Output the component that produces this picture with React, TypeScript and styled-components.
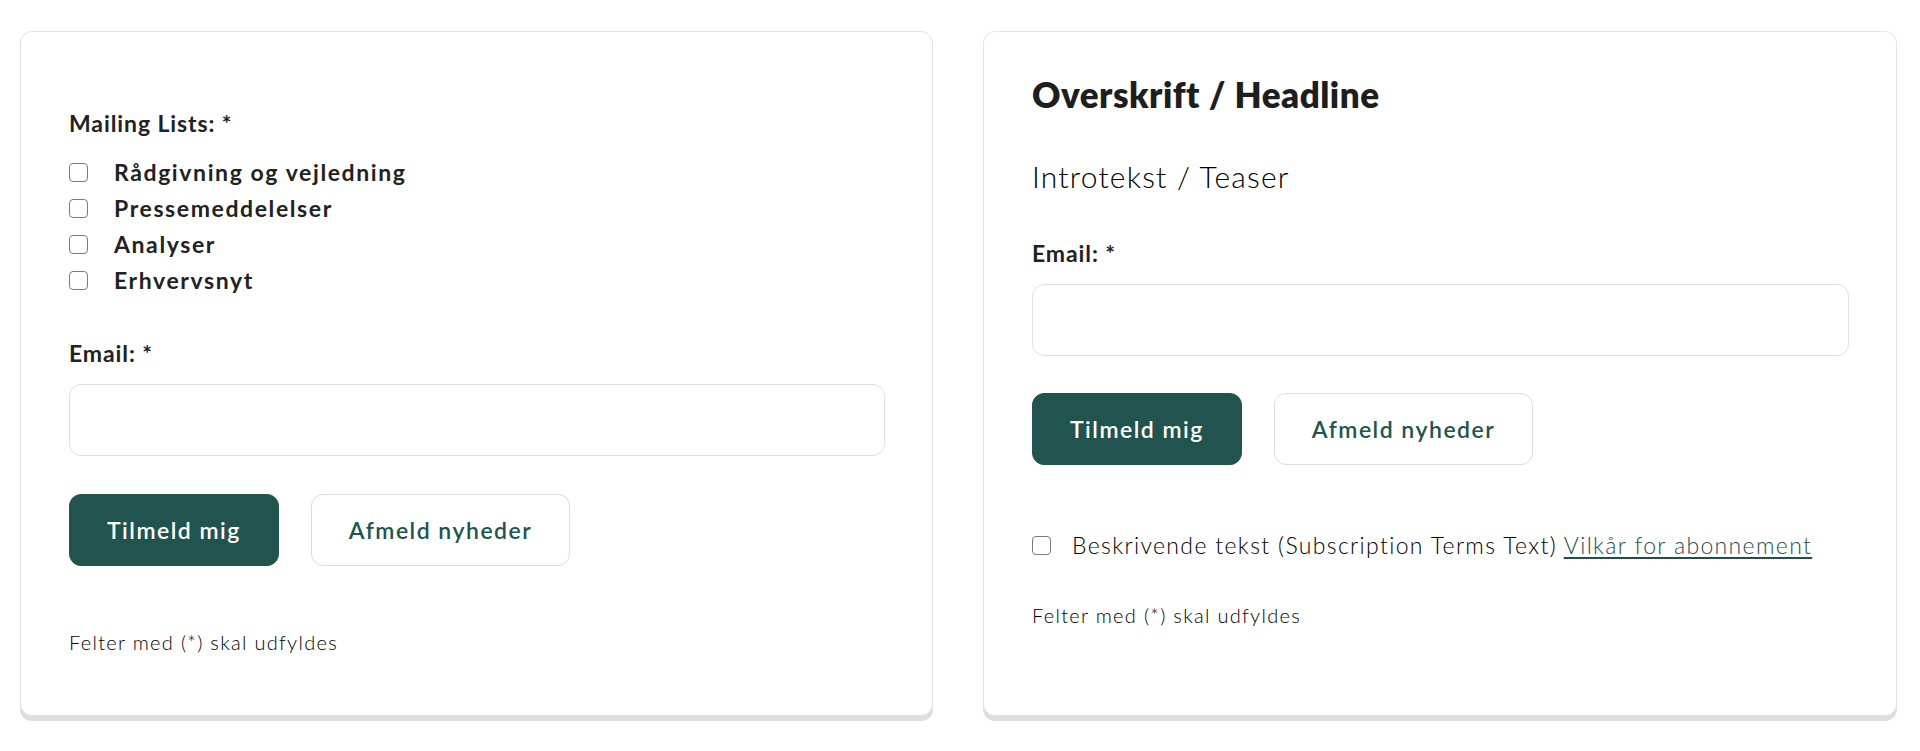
import React from "react";
import styled, { createGlobalStyle } from "styled-components";

const Global = createGlobalStyle`
  html, body { margin: 0; padding: 0; background: #ffffff; }
  body { font-family: "Lato", "Open Sans", sans-serif; color: #222222; }
  * { box-sizing: border-box; }
`;

const Page = styled.div`
  display: grid;
  grid-template-columns: 913px 914px;
  column-gap: 50px;
  padding: 31px 23px 30px 20px;
`;

const Card = styled.section<{ $padTop: number }>`
  background: #fff;
  border: 1px solid #e3e3e3;
  border-radius: 12px;
  box-shadow: 0 5px 0 0 #dedede;
  padding: ${(p) => p.$padTop}px 47px 0 48px;
  height: 685px;
  display: flex;
  flex-direction: column;
`;

const Title = styled.h2`
  margin: 0;
  font-family: "Lato", sans-serif;
  font-weight: 800;
  font-size: 35px;
  line-height: 41px;
  color: #1e1e1e;
  letter-spacing: 0.5px;
`;

const Intro = styled.p`
  margin: 41px 0 0;
  font-family: "Lato", sans-serif;
  font-weight: 300;
  font-size: 30px;
  line-height: 40px;
  letter-spacing: 1.2px;
  color: #000;
`;

const Label = styled.div<{ $mt: number }>`
  margin-top: ${(p) => p.$mt}px;
  font-weight: 700;
  font-size: 23px;
  line-height: 30px;
  letter-spacing: 0.9px;
  color: #222;
`;

const CheckList = styled.div`
  margin-top: 16px;
  display: flex;
  flex-direction: column;
`;

const CheckRow = styled.label`
  display: flex;
  align-items: center;
  gap: 26px;
  height: 36px;
  font-weight: 700;
  font-size: 23px;
  letter-spacing: 1.6px;
  color: #222;
`;

const Box = styled.input.attrs({ type: "checkbox" })`
  appearance: none;
  margin: 0;
  width: 19px;
  height: 19px;
  border: 1.5px solid #7a7a7a;
  border-radius: 4px;
  background: #fff;
  flex: none;
`;

const TextInput = styled.input`
  margin-top: 16px;
  width: 100%;
  height: 72px;
  border: 1.5px solid #e0e0e0;
  border-radius: 12px;
  background: #fff;
  font: inherit;
  padding: 0 20px;
  outline: none;
`;

const Buttons = styled.div<{ $mt: number }>`
  margin-top: ${(p) => p.$mt}px;
  display: flex;
  gap: 32px;
`;

const Button = styled.button<{ $primary?: boolean }>`
  height: 72px;
  padding: 0 37px;
  border-radius: 12px;
  font-family: "Lato", sans-serif;
  font-weight: 600;
  font-size: 23px;
  letter-spacing: 1.5px;
  cursor: pointer;
  background: ${(p) => (p.$primary ? "#22544f" : "#ffffff")};
  color: ${(p) => (p.$primary ? "#ffffff" : "#22544f")};
  border: ${(p) => (p.$primary ? "1.5px solid #22544f" : "1.5px solid #dcdcdc")};
`;

const Terms = styled.label`
  margin-top: 65px;
  display: flex;
  align-items: center;
  gap: 21px;
  font-weight: 300;
  font-size: 23px;
  line-height: 30px;
  letter-spacing: 1.35px;
  color: #000;
`;

const TermsLink = styled.a`
  color: #1f4f4a;
  text-decoration: underline;
  text-underline-offset: 3px;
`;

const Note = styled.p<{ $mt: number }>`
  margin: ${(p) => p.$mt}px 0 0;
  font-weight: 300;
  font-size: 20px;
  line-height: 28px;
  letter-spacing: 1.3px;
  color: #000;
`;

const lists = ["Rådgivning og vejledning", "Pressemeddelelser", "Analyser", "Erhvervsnyt"];

export default function App() {
  return (
    <>
      <Global />
      <Page>
        <Card $padTop={76}>
          <Label $mt={0}>Mailing Lists: *</Label>
          <CheckList>
            {lists.map((l) => (
              <CheckRow key={l}>
                <Box />
                {l}
              </CheckRow>
            ))}
          </CheckList>
          <Label $mt={40}>Email: *</Label>
          <TextInput type="email" />
          <Buttons $mt={38}>
            <Button $primary>Tilmeld mig</Button>
            <Button>Afmeld nyheder</Button>
          </Buttons>
          <Note $mt={62}>Felter med (*) skal udfyldes</Note>
        </Card>
        <Card $padTop={42}>
          <Title>Overskrift / Headline</Title>
          <Intro>Introtekst / Teaser</Intro>
          <Label $mt={42}>Email: *</Label>
          <TextInput type="email" />
          <Buttons $mt={37}>
            <Button $primary>Tilmeld mig</Button>
            <Button>Afmeld nyheder</Button>
          </Buttons>
          <Terms>
            <Box />
            <span>
              Beskrivende tekst (Subscription Terms Text){" "}
              <TermsLink href="#">Vilkår for abonnement</TermsLink>
            </span>
          </Terms>
          <Note $mt={41}>Felter med (*) skal udfyldes</Note>
        </Card>
      </Page>
    </>
  );
}
